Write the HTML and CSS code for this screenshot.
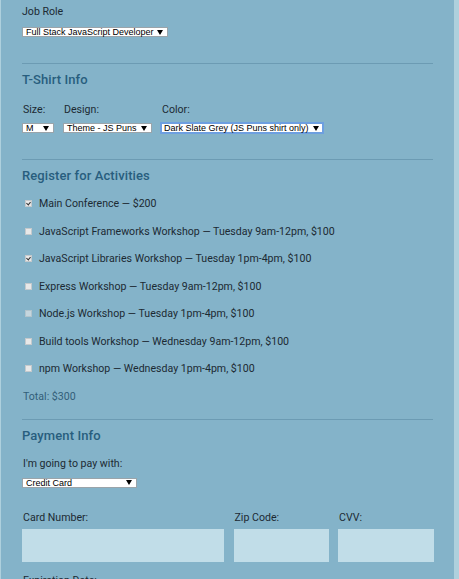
FILE: index.html
```html
<!DOCTYPE html>
<html>
<head>
<meta charset="utf-8">
<link rel="stylesheet" href="styles.css">
</head>
<body>
<div class="page">
  <div class="lbl first">Job Role</div>
  <div class="sel w-job"><span>Full Stack JavaScript Developer</span><svg class="arr" width="6" height="5" viewBox="0 0 6 5"><polygon points="0,0 6,0 3,5" fill="#000"/></svg></div>
  <hr class="rule r1">

  <h2 class="head">T-Shirt Info</h2>
  <div class="shirt">
    <div class="grp">
      <div class="lbl">Size:</div>
      <div class="sel w-size"><span>M</span><svg class="arr" width="6" height="5" viewBox="0 0 6 5"><polygon points="0,0 6,0 3,5" fill="#000"/></svg></div>
    </div>
    <div class="grp">
      <div class="lbl">Design:</div>
      <div class="sel w-design"><span>Theme - JS Puns</span><svg class="arr" width="6" height="5" viewBox="0 0 6 5"><polygon points="0,0 6,0 3,5" fill="#000"/></svg></div>
    </div>
    <div class="grp">
      <div class="lbl">Color:</div>
      <div class="sel focus w-color"><span>Dark Slate Grey (JS Puns shirt only)</span><svg class="arr" width="6" height="5" viewBox="0 0 6 5"><polygon points="0,0 6,0 3,5" fill="#000"/></svg></div>
    </div>
  </div>
  <hr class="rule r2">

  <h2 class="head">Register for Activities</h2>
  <div class="acts">
    <div class="act"><span class="cb on"></span>Main Conference — $200</div>
    <div class="act"><span class="cb"></span>JavaScript Frameworks Workshop — Tuesday 9am-12pm, $100</div>
    <div class="act"><span class="cb on"></span>JavaScript Libraries Workshop — Tuesday 1pm-4pm, $100</div>
    <div class="act"><span class="cb"></span>Express Workshop — Tuesday 9am-12pm, $100</div>
    <div class="act"><span class="cb dis"></span>Node.js Workshop — Tuesday 1pm-4pm, $100</div>
    <div class="act"><span class="cb"></span>Build tools Workshop — Wednesday 9am-12pm, $100</div>
    <div class="act"><span class="cb"></span>npm Workshop — Wednesday 1pm-4pm, $100</div>
    <div class="total">Total: $300</div>
  </div>
  <hr class="rule r3">

  <h2 class="head">Payment Info</h2>
  <div class="lbl pay">I'm going to pay with:</div>
  <div class="sel w-pay"><span>Credit Card</span><svg class="arr" width="6" height="5" viewBox="0 0 6 5"><polygon points="0,0 6,0 3,5" fill="#000"/></svg></div>

  <div class="card">
    <div class="lbl">Card Number:</div>
    <div class="lbl">Zip Code:</div>
    <div class="lbl">CVV:</div>
    <div class="inp"></div>
    <div class="inp"></div>
    <div class="inp"></div>
  </div>
  <div class="lbl exp">Expiration Date:</div>
</div>
</body>
</html>
```
FILE: styles.css
```css
html, body {
  margin: 0;
  padding: 0;
}
body {
  background: #aed0dd;
  font-family: Roboto, "Liberation Sans", sans-serif;
  color: #1c2a33;
}
.page {
  box-sizing: border-box;
  width: 453px;
  margin-left: 1px;
  background: #84b3c9;
  padding: 0 21px;
  overflow: hidden;
  height: 579px;
}
.lbl {
  font-size: 10.6px;
  line-height: 13px;
}
.lbl.first {
  padding-top: 5px;
}
.sel {
  box-sizing: border-box;
  height: 10px;
  background: #fff;
  border: 1px solid #9aa4aa;
  display: flex;
  align-items: center;
  justify-content: space-between;
  padding: 0 4px 0 3px;
  font-family: "Liberation Sans", Arial, sans-serif;
  font-size: 9px;
  line-height: 8px;
  color: #000;
  white-space: nowrap;
}
.sel span {
  display: block;
}
.sel .arr {
  flex: none;
  display: block;
}
.sel.focus {
  border: 2px solid #6d9fe0;
  height: 12px;
  padding: 0 3px 0 2px;
  margin-top: -1px;
}
.w-job { width: 146px; margin-top: 9px; }
.w-size { width: 32px; }
.w-design { width: 89px; }
.w-color { width: 164px; margin-left: -1px; }
.w-pay { width: 115px; margin-top: 8px; }

.rule {
  border: 0;
  height: 1px;
  background: #6c9bb3;
  margin: 0;
  width: 411px;
}
.r1 { margin-top: 26px; }
.r2 { margin-top: 25px; }
.r3 { margin-top: 16px; }

.head {
  font-size: 13px;
  line-height: 16px;
  font-weight: 500;
  color: #285e7e;
  margin: 8px 0 0 0;
  letter-spacing: 0.1px;
}

.shirt {
  display: flex;
  gap: 9px;
  margin-top: 15px;
}
.grp {
  display: flex;
  flex-direction: column;
  gap: 7px;
}
.grp .lbl {
  padding-left: 1px;
}

.acts {
  display: flex;
  flex-direction: column;
  gap: 14.5px;
  margin-top: 13px;
}
.act {
  display: flex;
  align-items: center;
  font-size: 10.6px;
  line-height: 13px;
}
.cb {
  box-sizing: border-box;
  width: 7px;
  height: 7px;
  margin: 0 7px 0 3px;
  background: #e8e8e8;
  border: 1px solid #c4c9cc;
  position: relative;
  flex: none;
}
.cb.on::after {
  content: "";
  position: absolute;
  left: 1px;
  top: 0px;
  width: 2px;
  height: 3px;
  border-right: 1px solid #333;
  border-bottom: 1px solid #333;
  transform: rotate(40deg);
}
.cb.dis {
  background: #c5d6de;
  border-color: #b2c4cc;
}
.total {
  font-size: 10.6px;
  line-height: 13px;
  color: #335f79;
  padding-left: 1px;
}

.lbl.pay {
  margin-top: 13px;
  padding-left: 1px;
}

.card {
  display: grid;
  grid-template-columns: 202px 95px 96px;
  column-gap: 9.5px;
  row-gap: 5px;
  margin-top: 23px;
}
.card .lbl {
  padding-left: 1px;
}
.inp {
  height: 33px;
  background: #c1dde8;
}
.lbl.exp {
  margin-top: 12px;
  padding-left: 1px;
}
```
